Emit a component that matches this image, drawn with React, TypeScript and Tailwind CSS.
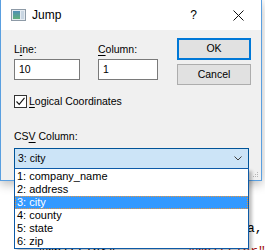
import { useState } from "react";

const columns = ["1: company_name", "2: address", "3: city", "4: county", "5: state", "6: zip"];

function AppIcon() {
  return (
    <svg width="15" height="12" viewBox="0 0 15 12">
      <defs>
        <linearGradient id="pane" x1="0" y1="0" x2="0" y2="1">
          <stop offset="0" stopColor="#4f8fb5" />
          <stop offset="1" stopColor="#5fb07a" />
        </linearGradient>
      </defs>
      <rect x="0.5" y="0.5" width="14" height="11" fill="#e6ecf2" stroke="#8d9aa6" />
      <rect x="2" y="2" width="7" height="8" fill="url(#pane)" />
      <rect x="10" y="2" width="3" height="8" fill="#c9d6e2" />
    </svg>
  );
}

function Mnemonic({ pre, key_, post }: { pre: string; key_: string; post: string }) {
  return (
    <span>
      {pre}
      <span className="underline underline-offset-[2px]">{key_}</span>
      {post}
    </span>
  );
}

export default function App() {
  const [checked] = useState(true);

  return (
    <div className="relative w-[265px] h-[250px] overflow-hidden bg-white font-['Liberation_Sans',Arial,sans-serif] text-[10.5px] text-black">
      {/* editor text behind the dialog */}
      <div className="absolute left-[247px] top-[222px] font-['Liberation_Mono',monospace] text-[13px] leading-[14px]">a,</div>
      <div className="absolute left-[38px] top-[245px] flex gap-[64px] font-['Liberation_Mono',monospace] text-[13px] leading-[14px]">
        <span>"Whittier",</span>
        <span className="text-[#a31515]">"Whittier"</span>
      </div>

      <div className="relative w-[262px] h-[181px] border-x border-b border-[#5a9fe0] bg-[#f0f0f0] shadow-[0_3px_10px_rgba(0,0,0,0.28)]">
        <div className="flex h-[30px] items-center bg-white">
          <div className="ml-[10px] mt-[-1px] flex">
            <AppIcon />
          </div>
          <span className="ml-[6px] text-[12px] leading-none">Jump</span>
          <span className="ml-auto mr-[36px] text-[12px] leading-none">?</span>
          <svg className="mr-[17px]" width="11" height="11" viewBox="0 0 11 11">
            <path d="M0.5 0.5 L10.5 10.5 M10.5 0.5 L0.5 10.5" stroke="#111" strokeWidth="1" />
          </svg>
        </div>

        <div className="pl-[13px] pr-[10px] pt-[8px]">
          <div className="flex">
            <div className="flex gap-[18px] pt-[4px]">
              <div className="flex w-[66px] flex-col gap-[2px]">
                <label className="h-[15px] leading-[15px]">
                  <Mnemonic pre="L" key_="i" post="ne:" />
                </label>
                <div className="flex h-[21px] items-center border border-[#7a7a7a] bg-white px-[4px]">10</div>
              </div>
              <div className="flex w-[60px] flex-col gap-[2px]">
                <label className="h-[15px] leading-[15px]">
                  <Mnemonic pre="" key_="C" post="olumn:" />
                </label>
                <div className="flex h-[21px] items-center border border-[#7a7a7a] bg-white px-[4px]">1</div>
              </div>
            </div>
            <div className="ml-[19px] flex w-[74px] flex-col gap-[4px]">
              <button className="h-[22px] border-2 border-[#0078d7] bg-[#e1e1e1] text-[10.5px]">OK</button>
              <button className="h-[21px] border border-[#adadad] bg-[#e1e1e1] text-[10.5px]">Cancel</button>
            </div>
          </div>

          <div className="mt-[10px] flex h-[13px] items-center gap-[2px]">
            <div className="flex h-[13px] w-[13px] items-center justify-center border border-[#333] bg-white">
              {checked && (
                <svg width="11" height="11" viewBox="0 0 11 11">
                  <path d="M1.5 5.5 L4.2 8.3 L9.5 1.8" fill="none" stroke="#111" strokeWidth="1.1" />
                </svg>
              )}
            </div>
            <span className="leading-[13px]">
              <Mnemonic pre="" key_="L" post="ogical Coordinates" />
            </span>
          </div>

          <label className="mt-[21px] block h-[15px] leading-[15px]">
            <Mnemonic pre="CS" key_="V" post=" Column:" />
          </label>
          <div className="mt-[4px] flex h-[21px] w-[235px] items-center border border-[#005499] bg-[#cce4f7] pl-[3px] pr-[6px]">
            <span>3: city</span>
            <svg className="ml-auto" width="8" height="5" viewBox="0 0 8 5">
              <path d="M0.5 0.5 L4 4 L7.5 0.5" fill="none" stroke="#404040" strokeWidth="1" />
            </svg>
          </div>
        </div>

        {/* size grip */}
        <div className="absolute bottom-[3px] right-[3px] grid grid-cols-3 gap-[1px]">
          {[0, 0, 1, 0, 1, 1, 1, 1, 1].map((on, i) => (
            <div key={i} className={on ? "h-[1px] w-[1px] bg-[#b5b5b5]" : "h-[1px] w-[1px]"} />
          ))}
        </div>
      </div>

      {/* open dropdown list */}
      <div className="absolute left-[14px] top-[168px] w-[235px] border border-[#0d5aa7] bg-white pt-[1px] text-[11px] shadow-[3px_3px_3px_rgba(0,0,0,0.25)]">
        {columns.map((c) => (
          <div
            key={c}
            className={
              c === "3: city"
                ? "h-[13px] border border-dotted border-[#e8953c] bg-[#3399ff] pl-[1px] leading-[11px] text-white"
                : "h-[13px] pl-[2px] leading-[13px]"
            }
          >
            {c}
          </div>
        ))}
      </div>
    </div>
  );
}
